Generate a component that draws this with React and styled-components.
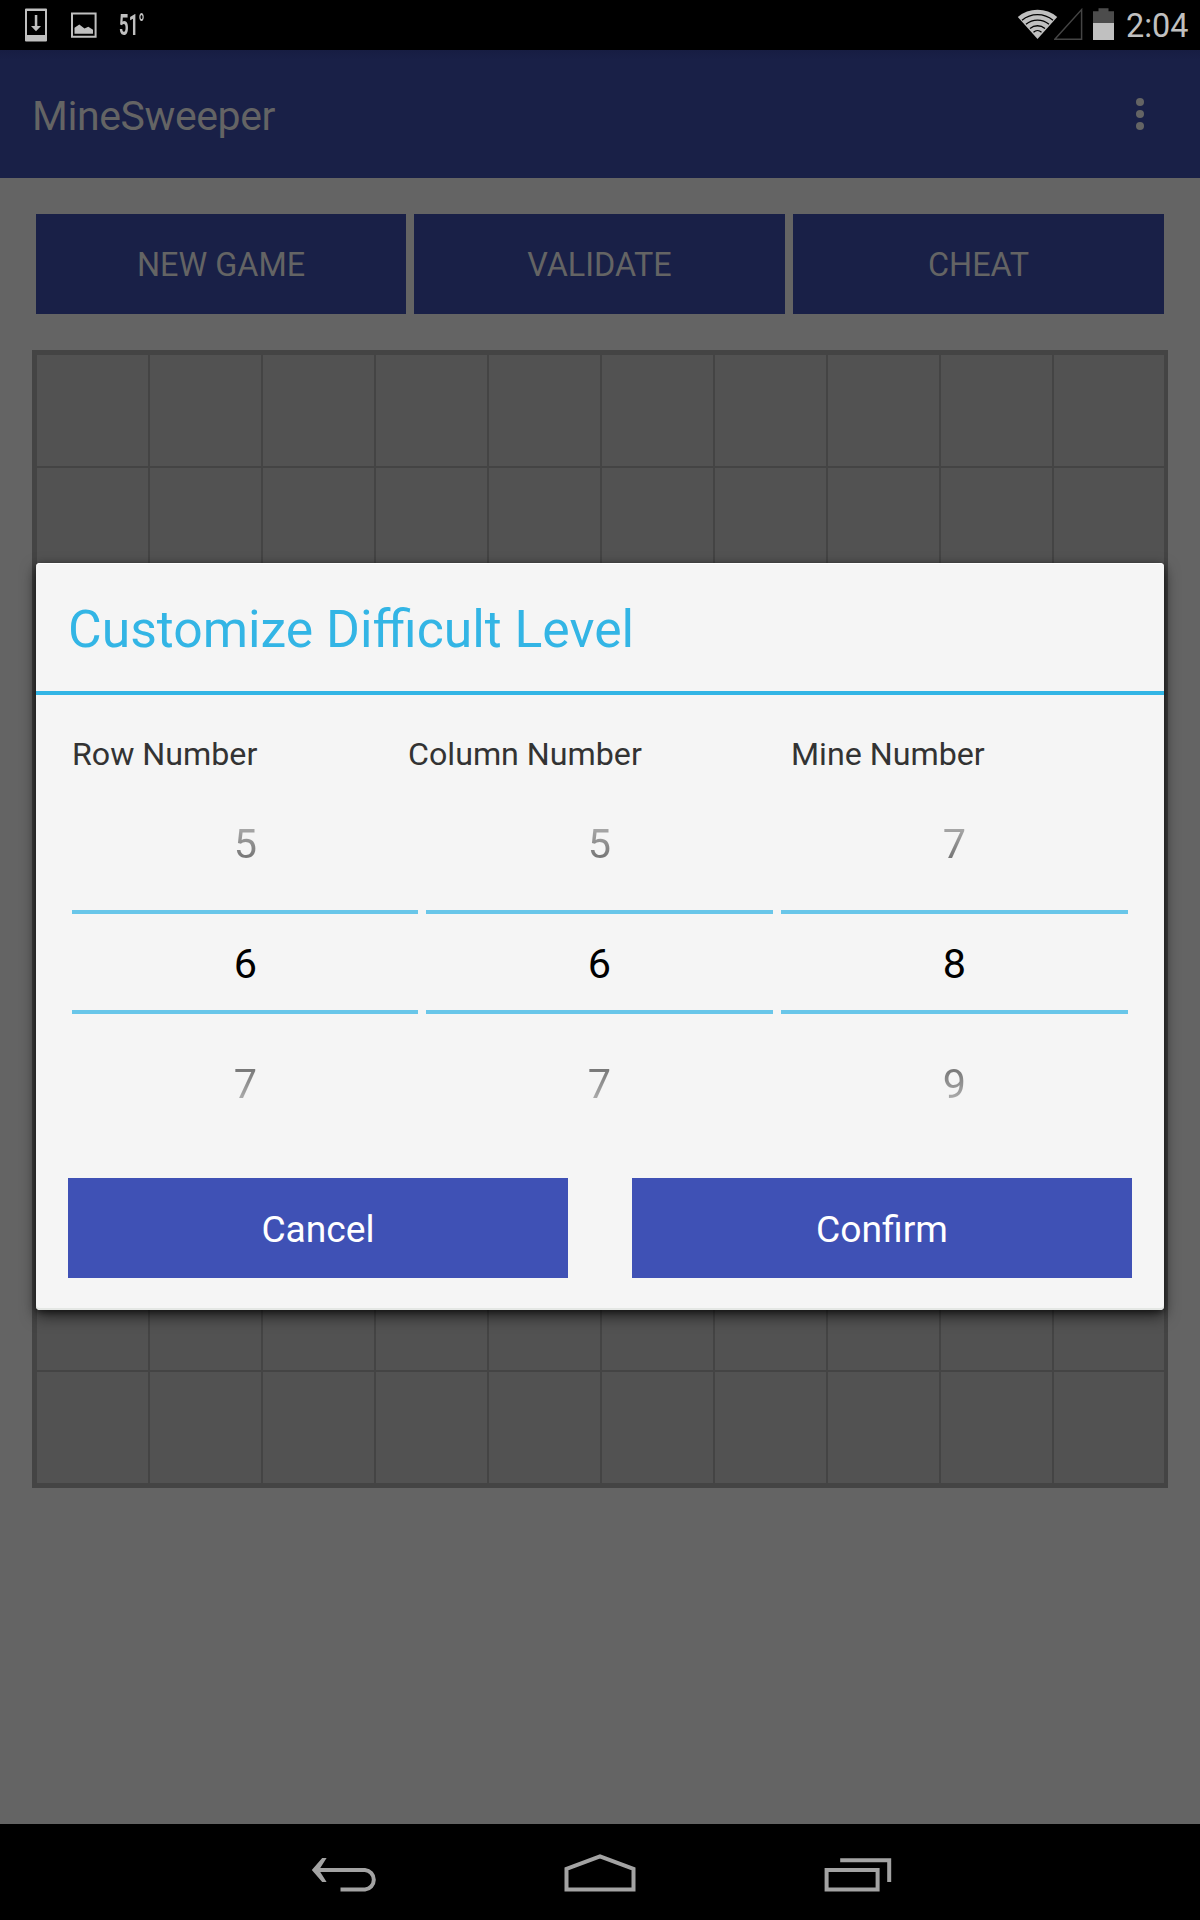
import React from "react";
import styled, { createGlobalStyle, css } from "styled-components";

const GlobalStyle = createGlobalStyle`
  * { box-sizing: border-box; }
  html, body { margin: 0; padding: 0; background: #000; }
  body { font-family: Roboto, "Noto Sans", sans-serif; }
`;

const Screen = styled.div`
  position: relative;
  display: flex;
  flex-direction: column;
  width: 1200px;
  height: 1920px;
  overflow: hidden;
  background: #646464;
`;

const StatusBar = styled.header`
  display: flex;
  justify-content: space-between;
  height: 50px;
  background: #000;
  color: #c0c0c0;
`;

const StatusGroup = styled.div`
  display: flex;
  align-items: flex-start;
`;

const Temperature = styled.span`
  width: 40px;
  margin-left: 22px;
  font-size: 29px;
  font-weight: 700;
  line-height: 51px;
  transform: scaleX(0.58);
  transform-origin: left center;
  white-space: nowrap;
`;

const Clock = styled.time`
  width: 74px;
  font-size: 32.4px;
  line-height: 52px;
  white-space: nowrap;
`;

const AppBar = styled.div`
  display: flex;
  align-items: center;
  justify-content: space-between;
  height: 128px;
  padding: 3px 44px 0 32px;
  background: linear-gradient(#171d42, #192047 10px);
  color: #646464;
`;

const AppTitle = styled.h1`
  margin: 0;
  font-size: 41px;
  font-weight: 400;
  line-height: 48px;
  letter-spacing: -0.4px;
`;

const OverflowButton = styled.button`
  display: flex;
  flex-direction: column;
  align-items: center;
  gap: 4px;
  width: 32px;
  margin-top: -3px;
  padding: 0;
  border: 0;
  background: none;
`;

const Dot = styled.i`
  width: 8px;
  height: 8px;
  border-radius: 50%;
  background: #646464;
`;

const Content = styled.main`
  flex: 1;
  padding: 36px 32px 0;
`;

const Actions = styled.div`
  display: grid;
  grid-template-columns: 370px 371px 371px;
  gap: 8px;
  padding: 0 4px;
`;

const FlatButton = styled.button`
  height: 100px;
  padding: 2px 0 0;
  border: 0;
  font-family: inherit;
  ${({ $dimmed }) =>
    $dimmed
      ? css`
          background: #192047;
          color: #646464;
          font-size: 32.4px;
        `
      : css`
          background: #3f51b5;
          color: #fff;
          font-size: 37.2px;
        `}
`;

const Board = styled.div`
  display: grid;
  grid-template-columns: repeat(9, 111px) 110px;
  grid-template-rows: repeat(10, 111px);
  gap: 2px;
  width: 1136px;
  margin-top: 36px;
  padding: 5px 4px 5px 5px;
  background: #444;
`;

const Cell = styled.div`
  background: #525252;
`;

const NavBar = styled.nav`
  height: 96px;
  background: #000;
  display: flex;
  justify-content: center;
`;

const DialogLayer = styled.div`
  position: absolute;
  top: 563px;
  left: 36px;
`;

const Dialog = styled.section`
  width: 1128px;
  height: 747px;
  border-radius: 4px;
  background: #f5f5f5;
  box-shadow: 0 6px 15px rgba(0, 0, 0, 0.6), 0 2px 6px rgba(0, 0, 0, 0.5), inset 0 -2px 0 #e4e7e4, inset 0 1px 0 #fff;
`;

const DialogTitle = styled.h2`
  height: 132px;
  margin: 0;
  padding: 2px 32px 0;
  border-bottom: 4px solid #33b5e5;
  color: #33b5e5;
  font-size: 51.7px;
  font-weight: 400;
  line-height: 129px;
`;

const Labels = styled.div`
  display: flex;
  height: 88px;
  padding: 0 0 0 36px;
  color: #333;
  font-size: 32.2px;
  line-height: 118px;
  white-space: nowrap;
`;

const Label = styled.span`
  width: ${({ $width }) => $width}px;
`;

const Pickers = styled.div`
  display: grid;
  grid-template-columns: 346px 347px 347px;
  gap: 8px;
  padding: 0 36px;
`;

const Picker = styled.div`
  display: grid;
  grid-template-rows: 127px 104px 127px;
  color: #000;
  font-size: 41.4px;
  text-align: center;

  &:first-child {
    text-indent: 1px;
  }
`;

const Selected = styled.div`
  border: solid #69c6e9;
  border-width: 4px 0;
  line-height: 101px;
`;

const fadeText = css`
  background-clip: text;
  -webkit-background-clip: text;
  color: transparent;
`;

const Previous = styled.div`
  ${fadeText}
  background-image: linear-gradient(transparent, rgba(0, 0, 0, 0.88));
  line-height: 122px;
`;

const Next = styled.div`
  ${fadeText}
  background-image: linear-gradient(rgba(0, 0, 0, 0.9), transparent);
  line-height: 140px;
`;

const DialogButtons = styled.div`
  display: grid;
  grid-template-columns: 1fr 1fr;
  gap: 64px;
  padding: 37px 32px 0;
`;

function UpdateIcon() {
  return (
    <svg width="71" height="50" fill="#c0c0c0">
      <path fillRule="evenodd" d="M26 8.5h20q1 0 1 1v31q0 1-1 1H26q-1 0-1-1v-31q0-1 1-1ZM27 11v24h18V11Z" />
      <path d="M34.8 15h2.5v11H41l-5 5.3-5-5.3h3.8Z" />
    </svg>
  );
}

function PictureIcon() {
  return (
    <svg width="26" height="50" fill="#c0c0c0">
      <path fillRule="evenodd" d="M0 12.4h25.6v25.4H0Zm2 2v21.4h21.6V14.4Z" />
      <path d="M3.5 33.7v-6l4.8-3.3 5.2 4.1 3.8-1.7 4.7 3v3.9Z" />
    </svg>
  );
}

function WifiIcon() {
  return (
    <svg width="36" height="50" viewBox="0 0 36 50" overflow="visible">
      <path d="M-.2 17a30 30 0 0 1 39.4 0L19.5 39Z" fill="#c0c0c0" />
      <g fill="none" stroke="#000" strokeWidth="1.3">
        <path d="M4 20.3a24 24 0 0 1 31 0" />
        <path d="M8 24.3a18 18 0 0 1 23 0" />
        <path d="M12 28.4a12 12 0 0 1 15 0" />
        <path d="M15.5 32.2a6 6 0 0 1 8 0" />
      </g>
    </svg>
  );
}

function SignalIcon() {
  return (
    <svg width="30" height="50">
      <path d="M.8 39.2 27.6 9.6v29.6Z" fill="none" stroke="#444" strokeWidth="1.5" />
    </svg>
  );
}

function BatteryIcon() {
  return (
    <svg width="42" height="50">
      <path d="M9 11.3h5.5V8.3h10v3H30V23H9Z" fill="#4c4c4c" />
      <path d="M9 23h21v17H9Z" fill="#c0c0c0" />
    </svg>
  );
}

function NavIcons() {
  return (
    <svg width="600" height="96" fill="none" stroke="#a3a3a3" strokeWidth="4">
      <path d="M15 46h50a9.8 9.8 0 0 1 0 19.5H40.5" />
      <path d="M22.2 34h4.4L19 46l7.6 12h-4.4L11.8 46Z" fill="#a3a3a3" stroke="none" />
      <path d="M266.5 65.6V44.8L300 32.4l33.5 12.4v20.8Z" />
      <path d="M526.6 46h51v19.5h-51ZM540.2 36.2h49V58" />
    </svg>
  );
}

const labels = [
  { text: "Row Number", width: 336 },
  { text: "Column Number", width: 383 },
  { text: "Mine Number", width: 300 },
];

const pickers = [
  [5, 6, 7],
  [5, 6, 7],
  [7, 8, 9],
];

export default function App() {
  return (
    <Screen>
      <GlobalStyle />
      <StatusBar>
        <StatusGroup>
          <UpdateIcon />
          <PictureIcon />
          <Temperature>51°</Temperature>
        </StatusGroup>
        <StatusGroup>
          <WifiIcon />
          <SignalIcon />
          <BatteryIcon />
          <Clock>2:04</Clock>
        </StatusGroup>
      </StatusBar>
      <AppBar>
        <AppTitle>MineSweeper</AppTitle>
        <OverflowButton aria-label="More options">
          <Dot />
          <Dot />
          <Dot />
        </OverflowButton>
      </AppBar>
      <Content>
        <Actions>
          <FlatButton $dimmed>NEW GAME</FlatButton>
          <FlatButton $dimmed>VALIDATE</FlatButton>
          <FlatButton $dimmed>CHEAT</FlatButton>
        </Actions>
        <Board>
          {Array.from({ length: 100 }, (_, i) => (
            <Cell key={i} />
          ))}
        </Board>
      </Content>
      <NavBar>
        <NavIcons />
      </NavBar>
      <DialogLayer>
        <Dialog role="dialog">
          <DialogTitle>Customize Difficult Level</DialogTitle>
          <Labels>
            {labels.map(({ text, width }) => (
              <Label key={text} $width={width}>
                {text}
              </Label>
            ))}
          </Labels>
          <Pickers>
            {pickers.map(([previous, value, next], i) => (
              <Picker key={i}>
                <Previous>{previous}</Previous>
                <Selected>{value}</Selected>
                <Next>{next}</Next>
              </Picker>
            ))}
          </Pickers>
          <DialogButtons>
            <FlatButton>Cancel</FlatButton>
            <FlatButton>Confirm</FlatButton>
          </DialogButtons>
        </Dialog>
      </DialogLayer>
    </Screen>
  );
}
